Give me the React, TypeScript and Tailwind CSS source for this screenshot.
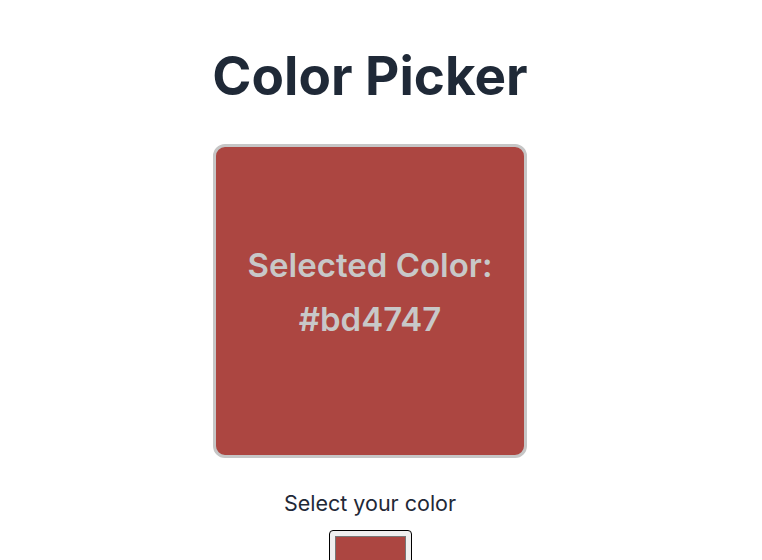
import React from "react";

export default function App() {
  return (
    <div className="w-[740px] flex flex-col items-center pt-[50px] font-['Inter',sans-serif] text-[#1f2937]">
      <h1 className="text-[53px] leading-[53px] font-bold">Color Picker</h1>
      <div className="mt-[41px] w-[314px] h-[314px] rounded-[12px] border-[3px] border-[#c6c6c6] bg-[#ac4641] flex flex-col items-center justify-center pb-[18px]">
        <div className="text-[33px] leading-[52px] font-semibold text-[#c8c8c8]">Selected Color:</div>
        <div className="mt-[2px] text-[33px] leading-[52px] font-semibold text-[#c8c8c8]">#bd4747</div>
      </div>
      <div className="mt-[31px] text-[21.5px] leading-[28px]">Select your color</div>
      <div className="mt-[13px] w-[83px] h-[40px] rounded-[4px] border border-black bg-[#efefef] px-[5px] py-[5px]">
        <div className="w-full h-full border border-[#777777] bg-[#ac4641]"></div>
      </div>
    </div>
  );
}
